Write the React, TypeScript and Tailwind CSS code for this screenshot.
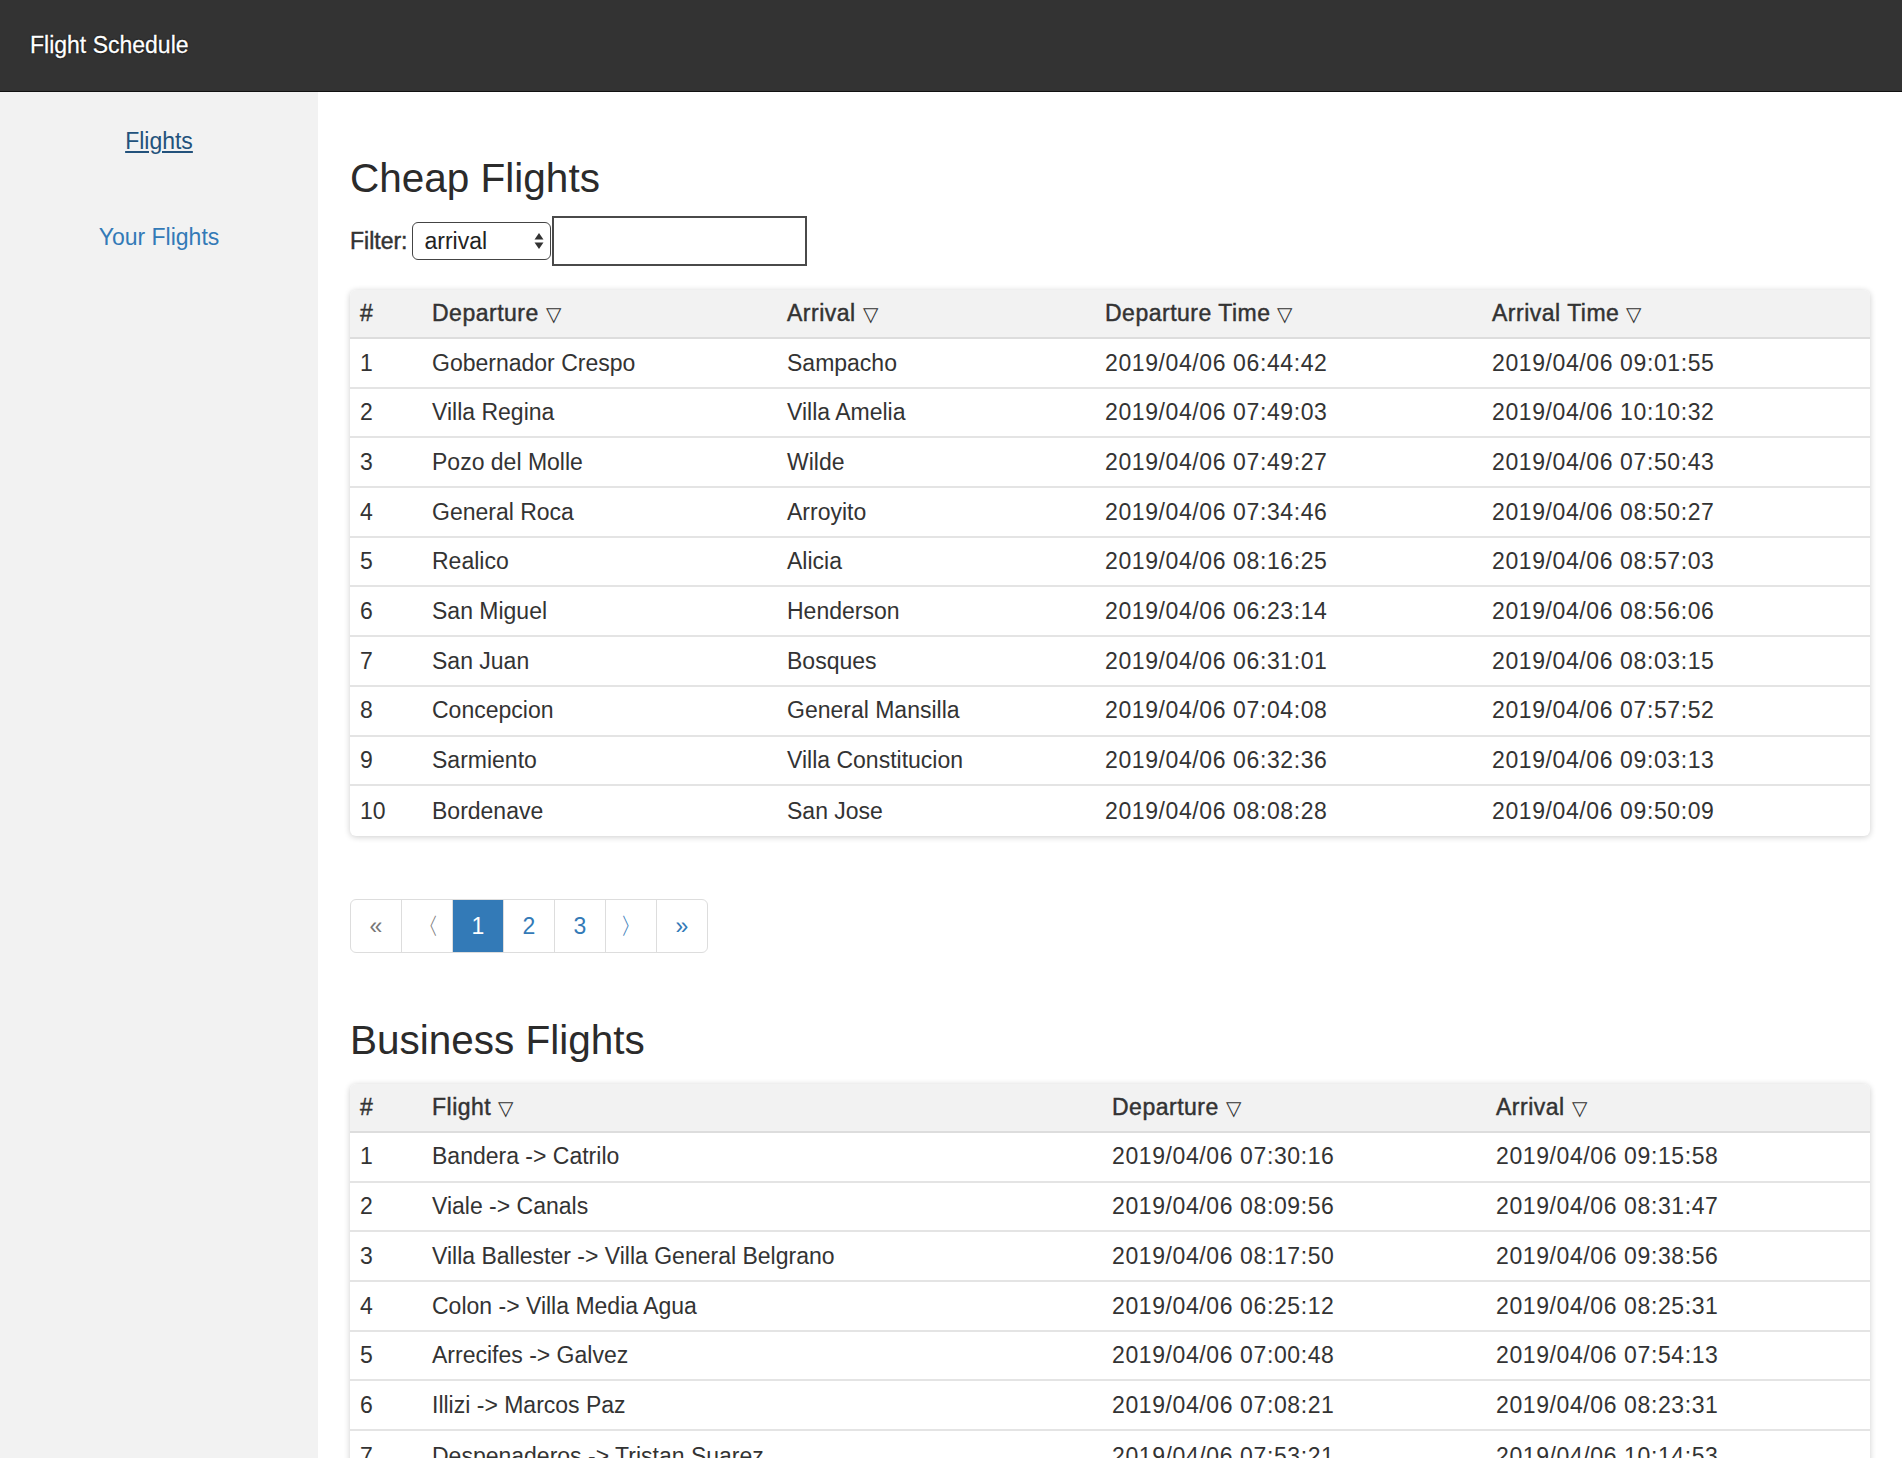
import React from "react";

type CheapFlight = [string, string, string, string];
type BusinessFlight = [string, string, string];

const cheapFlights: CheapFlight[] = [
  ["Gobernador Crespo", "Sampacho", "2019/04/06 06:44:42", "2019/04/06 09:01:55"],
  ["Villa Regina", "Villa Amelia", "2019/04/06 07:49:03", "2019/04/06 10:10:32"],
  ["Pozo del Molle", "Wilde", "2019/04/06 07:49:27", "2019/04/06 07:50:43"],
  ["General Roca", "Arroyito", "2019/04/06 07:34:46", "2019/04/06 08:50:27"],
  ["Realico", "Alicia", "2019/04/06 08:16:25", "2019/04/06 08:57:03"],
  ["San Miguel", "Henderson", "2019/04/06 06:23:14", "2019/04/06 08:56:06"],
  ["San Juan", "Bosques", "2019/04/06 06:31:01", "2019/04/06 08:03:15"],
  ["Concepcion", "General Mansilla", "2019/04/06 07:04:08", "2019/04/06 07:57:52"],
  ["Sarmiento", "Villa Constitucion", "2019/04/06 06:32:36", "2019/04/06 09:03:13"],
  ["Bordenave", "San Jose", "2019/04/06 08:08:28", "2019/04/06 09:50:09"],
];

const businessFlights: BusinessFlight[] = [
  ["Bandera -> Catrilo", "2019/04/06 07:30:16", "2019/04/06 09:15:58"],
  ["Viale -> Canals", "2019/04/06 08:09:56", "2019/04/06 08:31:47"],
  ["Villa Ballester -> Villa General Belgrano", "2019/04/06 08:17:50", "2019/04/06 09:38:56"],
  ["Colon -> Villa Media Agua", "2019/04/06 06:25:12", "2019/04/06 08:25:31"],
  ["Arrecifes -> Galvez", "2019/04/06 07:00:48", "2019/04/06 07:54:13"],
  ["Illizi -> Marcos Paz", "2019/04/06 07:08:21", "2019/04/06 08:23:31"],
  ["Despenaderos -> Tristan Suarez", "2019/04/06 07:53:21", "2019/04/06 10:14:53"],
];

const cheapCols = "grid grid-cols-[72px_355px_318px_387px_1fr]";
const businessCols = "grid grid-cols-[72px_680px_384px_1fr]";

// medium-ish weight, the reference uses a font with a 500 face
const medium = "[-webkit-text-stroke:0.45px_currentColor] tracking-[0.5px]";

function SortHead({ label }: { label: string }) {
  return (
    <span className={`pl-[10px] ${medium}`}>
      {label} <span className="text-[20px] tracking-normal [-webkit-text-stroke:0px]">▽</span>
    </span>
  );
}

function Table({
  cols,
  headers,
  rows,
}: {
  cols: string;
  headers: string[];
  rows: string[][];
}) {
  return (
    <div className="rounded-md bg-white shadow-[0_1px_6px_rgba(0,0,0,0.2)] overflow-hidden">
      <div className={`${cols} h-[49px] items-center bg-[#f2f2f2] border-b-2 border-[#dddddd]`}>
        <span className={`pl-[10px] ${medium}`}>#</span>
        {headers.map((h) => (
          <SortHead key={h} label={h} />
        ))}
      </div>
      {rows.map((row, i) => (
        <div
          key={i}
          className={`${cols} h-[49.7px] items-center border-b-2 border-[#e4e4e4] last:border-b-0`}
        >
          <span className="pl-[10px]">{i + 1}</span>
          {row.map((cell, j) => (
            <span
              key={j}
              className={`pl-[10px] whitespace-nowrap ${cell.startsWith("2019") ? "tracking-[0.6px]" : ""}`}
            >
              {cell}
            </span>
          ))}
        </div>
      ))}
    </div>
  );
}

function Pagination() {
  const items = [
    { label: "«", cls: "text-[#777777]" },
    { label: "〈", cls: "text-[#777777]" },
    { label: "1", cls: "bg-[#337ab7] border-[#337ab7] text-white z-10" },
    { label: "2", cls: "text-[#337ab7]" },
    { label: "3", cls: "text-[#337ab7]" },
    { label: "〉", cls: "text-[#337ab7]" },
    { label: "»", cls: "text-[#337ab7]" },
  ];
  return (
    <div className="flex ml-px">
      {items.map((it, i) => (
        <span
          key={i}
          className={`relative -ml-px flex h-[54px] w-[52px] items-center justify-center border border-[#dddddd] first:rounded-l-md last:rounded-r-md ${it.cls}`}
        >
          {it.label}
        </span>
      ))}
    </div>
  );
}

export default function App() {
  return (
    <div className="min-h-screen flex flex-col font-['Liberation_Sans',Arial,sans-serif] text-[23px] text-[#333333]">
      <header className="h-[92px] shrink-0 flex items-center bg-[#333333] border-b border-[#111111] pl-[30px]">
        <span className="text-white [text-shadow:0_0_2px_#000,0_0_1px_#000] [-webkit-text-stroke:0.3px_#fff]">
          Flight Schedule
        </span>
      </header>
      <div className="flex flex-1">
        <nav className="w-[318px] shrink-0 bg-[#f2f2f2] flex flex-col items-center pt-[35px]">
          <a href="#" className="text-[#23527c] underline leading-[28px]">
            Flights
          </a>
          <a href="#" className="text-[#337ab7] leading-[28px] mt-[68px]">
            Your Flights
          </a>
        </nav>
        <main className="flex-1 px-[32px] pt-[66px] pb-16">
          <h2 className="text-[40.5px] leading-[40px] text-[#2b2b2b]">Cheap Flights</h2>
          <div className="mt-[18px] flex items-center">
            <label className="mr-[4px] [-webkit-text-stroke:0.45px_currentColor]">Filter:</label>
            <div className="relative">
              <select className="appearance-none h-[38px] w-[139px] rounded-[6px] border border-[#444444] bg-white pl-[12px] text-[#222222]">
                <option>arrival</option>
                <option>departure</option>
              </select>
              <svg
                className="pointer-events-none absolute right-[7px] top-[10px]"
                width="10"
                height="18"
                viewBox="0 0 10 18"
              >
                <path d="M5 1 L9.5 7.5 H0.5 Z" fill="#333" />
                <path d="M5 17 L9.5 10.5 H0.5 Z" fill="#333" />
              </svg>
            </div>
            <input className="ml-px h-[50px] w-[255px] border-2 border-[#4a4a4a] bg-white px-2 outline-none" />
          </div>
          <div className="mt-[24px]">
            <Table
              cols={cheapCols}
              headers={["Departure", "Arrival", "Departure Time", "Arrival Time"]}
              rows={cheapFlights}
            />
          </div>
          <div className="mt-[63px]">
            <Pagination />
          </div>
          <h2 className="mt-[67px] text-[40.5px] leading-[40px] text-[#2b2b2b]">Business Flights</h2>
          <div className="mt-[24px]">
            <Table cols={businessCols} headers={["Flight", "Departure", "Arrival"]} rows={businessFlights} />
          </div>
        </main>
      </div>
    </div>
  );
}
